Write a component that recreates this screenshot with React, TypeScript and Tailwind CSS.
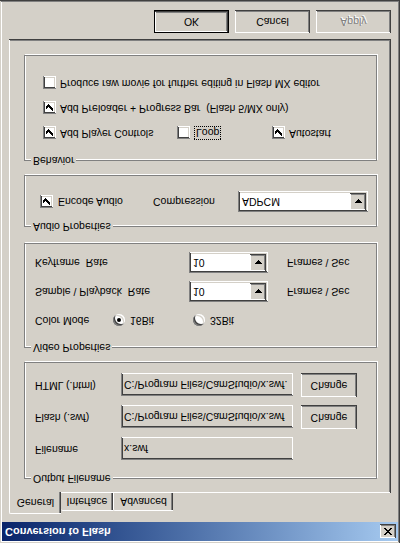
import React from 'react';

// classic win98-ish bevels
const raised = 'shadow-[inset_-1px_-1px_#404040,inset_1px_1px_#ffffff,inset_-2px_-2px_#808080,inset_2px_2px_#d4d0c8]';
const sunken = 'shadow-[inset_1px_1px_#808080,inset_-1px_-1px_#ffffff,inset_2px_2px_#404040,inset_-2px_-2px_#d4d0c8]';

function Pixels({ w, h, px }: { w: number; h: number; px: number[][] }) {
  return (
    <svg width={w} height={h} viewBox={`0 0 ${w} ${h}`} shapeRendering="crispEdges">
      {px.map(([x, y, len], i) => (
        <rect key={i} x={x} y={y} width={len} height={1} fill="#000" />
      ))}
    </svg>
  );
}

const checkPx = [[6, 0, 1], [5, 1, 2], [0, 2, 1], [4, 2, 3], [0, 3, 2], [3, 3, 3], [0, 4, 5], [1, 5, 3], [2, 6, 1]];
const arrowPx = [[0, 0, 7], [1, 1, 5], [2, 2, 3], [3, 3, 1]];
const closePx = [
  [0, 0, 2], [6, 0, 2], [1, 1, 2], [5, 1, 2], [2, 2, 4], [3, 3, 2], [2, 4, 4], [1, 5, 2], [5, 5, 2], [0, 6, 2], [6, 6, 2],
];

function CheckBox({ checked }: { checked?: boolean }) {
  return (
    <span className={`flex h-[13px] w-[13px] shrink-0 items-center justify-center bg-white ${sunken}`}>
      {checked && <Pixels w={7} h={7} px={checkPx} />}
    </span>
  );
}

function Radio({ checked }: { checked?: boolean }) {
  return (
    <span className={`flex h-[12px] w-[12px] shrink-0 items-center justify-center rounded-full bg-white ${sunken}`}>
      {checked && <span className="h-[4px] w-[4px] rounded-full bg-black" />}
    </span>
  );
}

function Combo({ value, className }: { value: string; className: string }) {
  return (
    <div className={`flex h-[21px] bg-white p-[2px] ${sunken} ${className}`}>
      <span className="flex-1 pl-[2px] leading-[17px]">{value}</span>
      <span className={`flex w-[16px] items-center justify-center bg-[#d4d0c8] ${raised}`}>
        <Pixels w={7} h={4} px={arrowPx} />
      </span>
    </div>
  );
}

function Group({ label, className, children }: { label: string; className: string; children: React.ReactNode }) {
  return (
    <div className={`relative box-border w-[353px] border border-[#808080] shadow-[1px_1px_0_#ffffff,inset_1px_1px_0_#ffffff] ${className}`}>
      <span className="absolute -top-[7px] left-[6px] bg-[#d4d0c8] px-[2px] leading-[13px]">{label}</span>
      {children}
    </div>
  );
}

function FileRow({ label, value, change }: { label: string; value: string; change?: boolean }) {
  return (
    <div className="flex h-[24px] items-center">
      <span className="w-[86px] shrink-0">{label}</span>
      <div className={`h-[23px] w-[172px] overflow-hidden whitespace-nowrap bg-[#d4d0c8] px-[3px] leading-[23px] ${sunken}`}>
        {value}
      </div>
      {change && (
        <button className={`ml-[8px] h-[24px] w-[56px] bg-[#d4d0c8] ${raised}`}>Change</button>
      )}
    </div>
  );
}

export default function App() {
  return (
    <div className="h-[543px] w-[400px] -scale-y-100 overflow-hidden">
      <div className={`flex h-full w-full flex-col bg-[#d4d0c8] p-[2px] font-['Liberation_Sans',Arial,sans-serif] text-[10.5px] text-black shadow-[inset_-1px_-1px_#404040,inset_1px_1px_#d4d0c8,inset_-2px_-2px_#808080,inset_2px_2px_#ffffff]`}>
        {/* title bar */}
        <div className="flex h-[19px] shrink-0 items-center justify-between bg-linear-to-r from-[#0a246a] to-[#a6caf0] pl-[3px] pr-[2px]">
          <span className="text-[11px] font-bold text-white">Conversion to Flash</span>
          <span className={`flex h-[14px] w-[16px] items-center justify-center bg-[#d4d0c8] ${raised}`}>
            <Pixels w={8} h={7} px={closePx} />
          </span>
        </div>

        {/* tabs */}
        <div className="mx-[7px] mt-[9px] flex h-[20px] items-end">
          <div className="relative z-10 -mb-[1px] flex h-[22px] w-[52px] items-center justify-center rounded-tl-[2px] border-l border-t border-white bg-[#d4d0c8] shadow-[inset_-1px_0_#404040,inset_-2px_0_#808080]">
            General
          </div>
          <div className="flex h-[18px] w-[52px] items-center justify-center rounded-tl-[2px] border-t border-white bg-[#d4d0c8] shadow-[inset_-1px_0_#404040,inset_-2px_0_#808080]">
            Interface
          </div>
          <div className="flex h-[18px] w-[60px] items-center justify-center rounded-tl-[2px] border-l border-t border-white bg-[#d4d0c8] shadow-[inset_-1px_0_#404040,inset_-2px_0_#808080]">
            Advanced
          </div>
        </div>

        {/* tab panel */}
        <div className={`mx-[7px] h-[454px] shrink-0 pl-[15px] pt-[14px] ${raised}`}>
          <Group label="Output Filename" className="h-[117px] pl-[10px] pt-[17px]">
            <div className="flex flex-col gap-[8px]">
              <FileRow label="Filename" value="x.swf" />
              <FileRow label="Flash (.swf)" value="C:\Program Files\CamStudio\x.swf" change />
              <FileRow label="HTML (.html)" value="C:\Program Files\CamStudio\x.swf." change />
            </div>
          </Group>

          <Group label="Video Properties" className="mt-[14px] h-[105px] pl-[10px] pt-[16px]">
            <div className="flex h-[22px] items-center">
              <span className="w-[78px] shrink-0">Color Mode</span>
              <div className="flex w-[80px] items-center gap-[5px]">
                <Radio checked />
                <span>16Bit</span>
              </div>
              <div className="flex items-center gap-[5px]">
                <Radio />
                <span>32Bit</span>
              </div>
            </div>
            <div className="mt-[7px] flex h-[21px] items-center">
              <span className="w-[154px] shrink-0">Sample \ Playback&nbsp; Rate</span>
              <Combo value="10" className="w-[79px]" />
              <span className="ml-[19px]">Frames \ Sec</span>
            </div>
            <div className="mt-[8px] flex h-[21px] items-center">
              <span className="w-[154px] shrink-0">Keyframe&nbsp; Rate</span>
              <Combo value="10" className="w-[79px]" />
              <span className="ml-[19px]">Frames \ Sec</span>
            </div>
          </Group>

          <Group label="Audio Properties" className="mt-[16px] h-[52px] pl-[15px] pt-[14px]">
            <div className="flex h-[21px] items-center">
              <div className="flex w-[113px] items-center gap-[5px]">
                <CheckBox checked />
                <span>Encode Audio</span>
              </div>
              <span className="w-[85px] shrink-0">Compression</span>
              <Combo value="ADPCM" className="w-[130px]" />
            </div>
          </Group>

          <Group label="Behavior" className="mt-[14px] h-[106px] pl-[18px] pt-[18px]">
            <div className="flex flex-col gap-[7px]">
              <div className="flex h-[18px] items-center">
                <div className="flex w-[134px] items-center gap-[4px]">
                  <CheckBox checked />
                  <span>Add Player Controls</span>
                </div>
                <div className="flex w-[95px] items-center gap-[4px]">
                  <CheckBox />
                  <span className="border border-dotted border-black px-[1px] leading-[12px]">Loop</span>
                </div>
                <div className="flex items-center gap-[4px]">
                  <CheckBox checked />
                  <span>Autostart</span>
                </div>
              </div>
              <div className="flex h-[18px] items-center gap-[4px]">
                <CheckBox checked />
                <span>Add Preloader + Progress Bar&nbsp; (Flash 5\MX only)</span>
              </div>
              <div className="flex h-[18px] items-center gap-[4px]">
                <CheckBox />
                <span>Produce raw movie for further editing in Flash MX editor</span>
              </div>
            </div>
          </Group>
        </div>

        {/* dialog buttons */}
        <div className="mx-[7px] mt-[6px] flex justify-end gap-[6px]">
          <button className={`h-[23px] w-[75px] border border-black bg-[#d4d0c8] ${raised}`}>OK</button>
          <button className={`h-[23px] w-[75px] bg-[#d4d0c8] ${raised}`}>Cancel</button>
          <button className={`h-[23px] w-[75px] bg-[#d4d0c8] text-[#808080] [text-shadow:1px_1px_0_#ffffff] ${raised}`}>Apply</button>
        </div>
      </div>
    </div>
  );
}
